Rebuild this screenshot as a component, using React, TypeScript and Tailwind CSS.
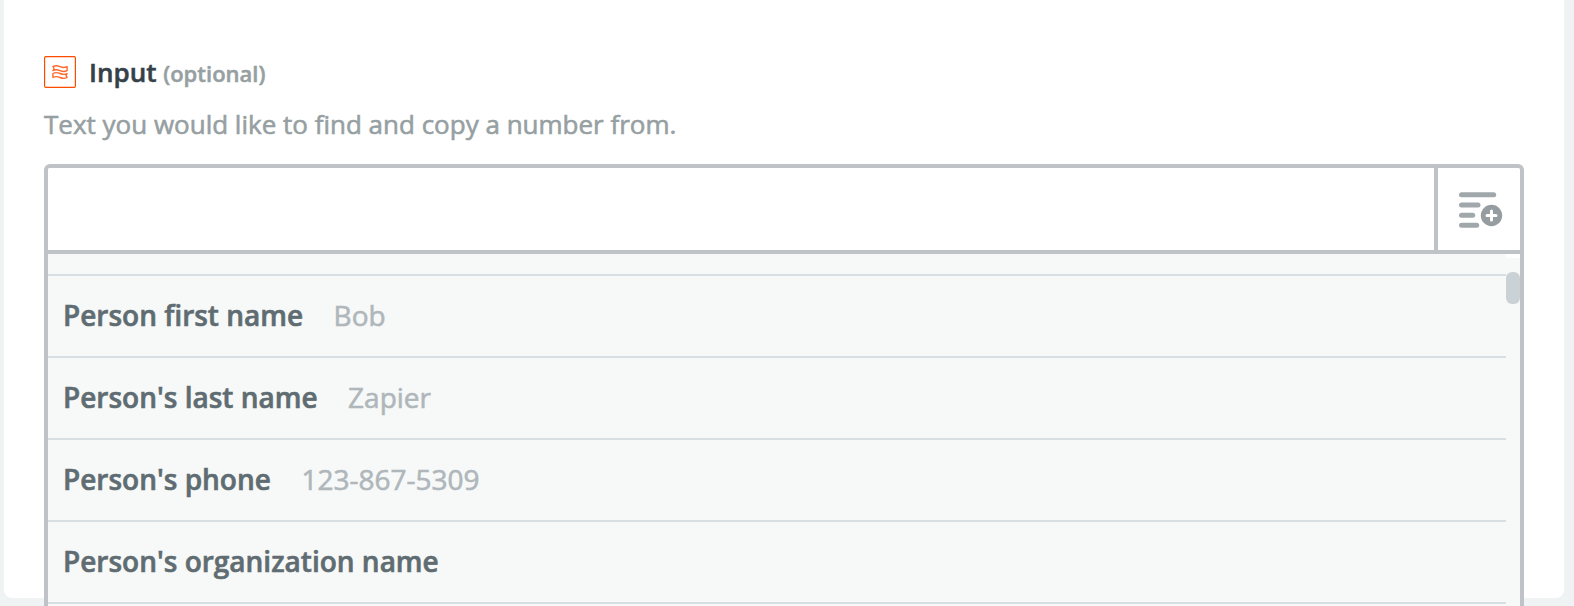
interface Field {
  id: string;
  label: string;
  sample?: string;
}

const fields: Field[] = [
  { id: "first-name", label: "Person first name", sample: "Bob" },
  { id: "last-name", label: "Person's last name", sample: "Zapier" },
  { id: "phone", label: "Person's phone", sample: "123-867-5309" },
  { id: "organization", label: "Person's organization name" },
];

function FormatterIcon() {
  return (
    <svg width="32" height="32" viewBox="0 0 32 32" fill="none" className="shrink-0">
      <rect x="0.6" y="0.6" width="30.8" height="30.8" rx="1.2" stroke="#ff4a00" strokeWidth="1.2" />
      <g stroke="#ff6a30" strokeWidth="1.4" strokeLinejoin="round">
        <path d="M8.900 10.600c2-1.200 4.200-1.200 7.100 0s5.100 1.100 7.100 0v4c-2 1.200-4.200 1.200-7.100 0s-5.100-1.100-7.100 0c1.400-1.300 1.400-2.700 0-4Z" />
        <path d="M8.900 17.500c2-1.200 4.200-1.200 7.100 0s5.100 1.100 7.100 0c-1.300 1.300-1.300 2.700 0 4-2 1.200-4.200 1.200-7.100 0s-5.100-1.100-7.100 0Z" />
      </g>
    </svg>
  );
}

function InsertFieldIcon() {
  return (
    <svg width="44" height="36" viewBox="0 0 44 36" fill="none" className="mt-[2px] ml-1">
      <g stroke="#a1a8ac" strokeWidth="5" strokeLinecap="round">
        <path d="M2.500 2.800H34.700" />
        <path d="M2.500 13H19" />
        <path d="M2.500 23.200H13.700" />
        <path d="M2.500 33.200H17.700" />
      </g>
      <circle cx="32.500" cy="23.500" r="10.700" fill="#969da1" />
      <path d="M32.500 19v9M28 23.500h9" stroke="#fff" strokeWidth="3" strokeLinecap="round" />
    </svg>
  );
}

function FieldRow({ field }: { field: Field }) {
  return (
    <div className="flex h-[82px] items-center border-b-2 border-[#d8dfe2] pb-[2px] pl-[15px] text-[28px] leading-none whitespace-nowrap [-webkit-text-stroke-width:0.6px]">
      <span className="font-semibold text-[#5f6c72]">{field.label}</span>
      {field.sample && <span className="ml-[30.500px] text-[#afb7bb]">{field.sample}</span>}
    </div>
  );
}

export default function App() {
  return (
    <div className="h-[606px] w-[1574px] overflow-hidden bg-[#eff3f4] pr-[10px] pl-1 font-['Open_Sans','Liberation_Sans',sans-serif]">
      <div className="h-[598px] rounded-b-lg bg-white px-10 pt-14">
        {/* Label */}
        <div className="flex h-8 items-center">
          <FormatterIcon />
          <p className="ml-[13px] text-[26px] leading-8 font-semibold whitespace-nowrap text-[#354148] [-webkit-text-stroke-width:0.5px]">
            Input <span className="text-[22px] text-[#969fa2]">(optional)</span>
          </p>
        </div>
        <p className="mt-[18px] h-[38px] text-[26px] leading-9 whitespace-nowrap text-[#969fa2] [-webkit-text-stroke-width:0.6px]">
          Text you would like to find and copy a number from.
        </p>

        {/* Input with field picker */}
        <div className="mt-5 h-[460px] rounded-t-[6px] border-x-4 border-t-4 border-[#bfc3c7] bg-[#f7f9f8]">
          <div className="flex h-[86px] rounded-t-[2px] border-b-4 border-[#bfc3c7] bg-white">
            <input type="text" className="h-full min-w-0 flex-1 px-4 text-[26px] outline-none" />
            <button className="flex w-[86px] items-center justify-center border-l-4 border-[#bfc3c7]">
              <InsertFieldIcon />
            </button>
          </div>
          <div className="flex">
            <div className="flex-1">
              <div className="h-[22px] border-b-2 border-[#d8dfe2]" />
              {fields.map((field) => (
                <FieldRow key={field.id} field={field} />
              ))}
            </div>
            {/* Scrollbar */}
            <div className="w-[14px]">
              <div className="h-1 bg-white" />
              <div className="mt-[14px] h-8 rounded-[6px] bg-[#cbd2d5]" />
            </div>
          </div>
        </div>
      </div>
    </div>
  );
}
